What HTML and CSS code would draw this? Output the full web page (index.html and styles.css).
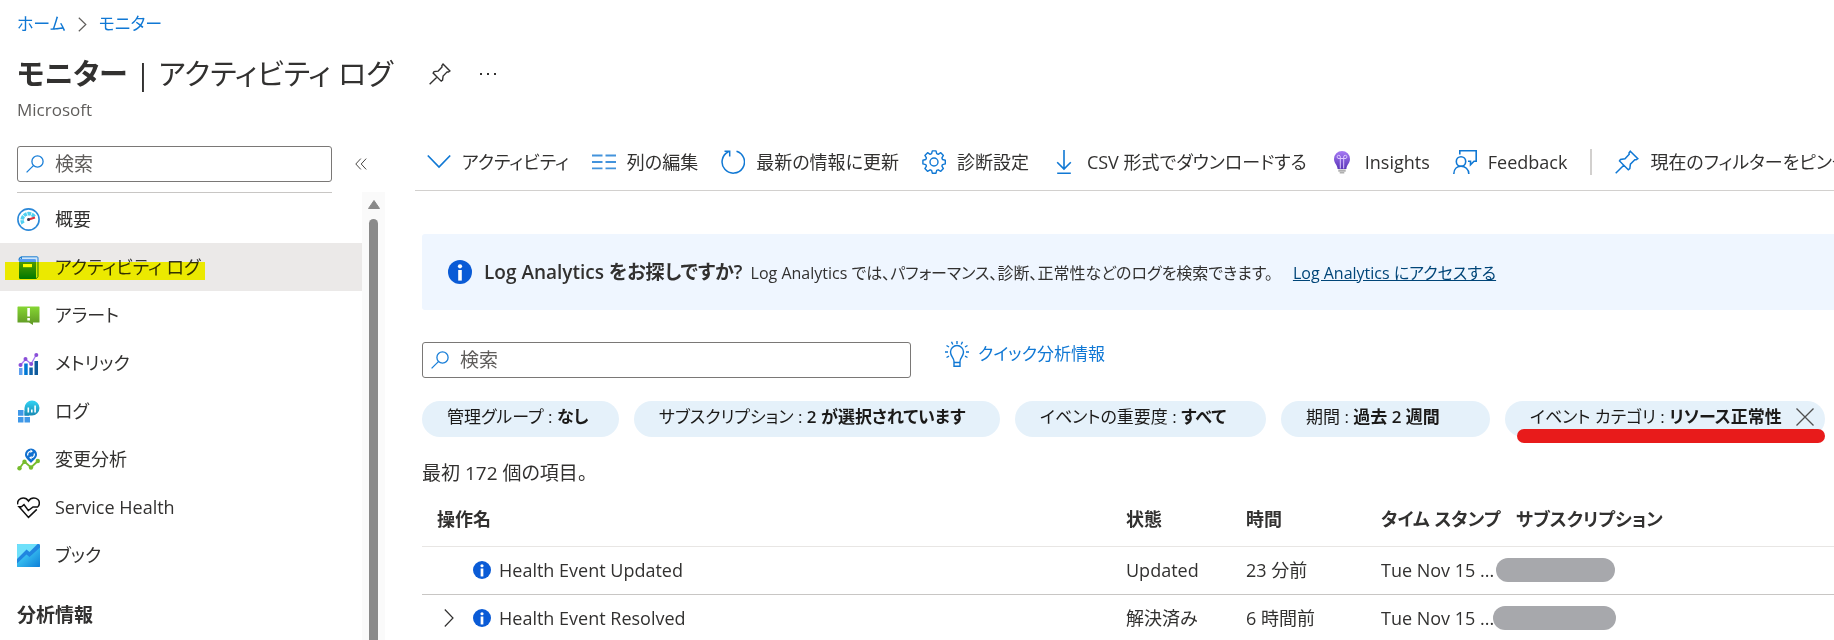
FILE: index.html
```html
<!DOCTYPE html>
<html lang="ja">
<head>
<meta charset="utf-8">
<title>モニター | アクティビティ ログ</title>
<link rel="stylesheet" href="styles.css">
</head>
<body>
<svg class="defs" aria-hidden="true">
  <defs>
    <linearGradient id="g-green" x1="0" y1="0" x2="0" y2="1"><stop offset="0" stop-color="#86d633"/><stop offset="1" stop-color="#5e9624"/></linearGradient>
    <linearGradient id="g-blue" x1="0" y1="0" x2="0" y2="1"><stop offset="0" stop-color="#5ea0ef"/><stop offset="1" stop-color="#0078d4"/></linearGradient>
    <linearGradient id="g-cyan" x1="0" y1="0" x2="0" y2="1"><stop offset="0" stop-color="#32d4f5"/><stop offset="1" stop-color="#198ab3"/></linearGradient>
    <linearGradient id="g-book" x1="0" y1="0" x2="1" y2="1"><stop offset="0" stop-color="#50e6ff"/><stop offset="1" stop-color="#0f7fd8"/></linearGradient>
    <linearGradient id="g-purple" x1="0" y1="0" x2="0" y2="1"><stop offset="0" stop-color="#a67af4"/><stop offset="1" stop-color="#5a35b8"/></linearGradient>
    <symbol id="i-search" viewBox="0 0 18 18"><g fill="none" stroke="#1a7fd8" stroke-width="1.3"><circle cx="11.5" cy="6.5" r="5.6"/><path d="M7.4 10.6.6 17.4"/></g></symbol>
    <symbol id="i-info" viewBox="0 0 24 24"><circle cx="12" cy="12" r="12" fill="#0a5bd6"/><circle cx="12" cy="6.3" r="2.1" fill="#fff"/><path d="M10.2 10h3.6v10.6h-3.6z" fill="#fff"/></symbol>
    <symbol id="i-pin" viewBox="0 0 24 24"><path d="M15.3 1.2 22.8 8.7 21.2 9.8 19.8 9.7 15.4 14.2 14.8 18.6 13.3 19.8 4.5 11 5.5 9.4 10 8.8 14.2 4.3 14 2.9ZM8.8 15.2.7 23.3" fill="none" stroke="currentColor" stroke-width="1.5"/></symbol>
  </defs>
</svg>

<header class="page-head">
  <nav class="crumbs" aria-label="階層">
    <a href="#home">ホーム</a>
    <svg width="9" height="15" viewBox="0 0 9 15"><path d="M.8.8 7.8 7.5.8 14.2" fill="none" stroke="#605e5c" stroke-width="1.2"/></svg>
    <a href="#monitor">モニター</a>
  </nav>
  <div class="title-row">
    <h1><strong>モニター</strong> | アクティビティ ログ</h1>
    <button class="icon-btn pin" aria-label="ピン留め"><svg width="22" height="22"><use href="#i-pin"/></svg></button>
    <button class="icon-btn" aria-label="その他"><svg width="18" height="4" viewBox="0 0 18 4" fill="#323130"><path d="M1 1h2v2H1zM8 1h2v2H8zM15 1h2v2h-2z"/></svg></button>
  </div>
  <p class="subtitle">Microsoft</p>
</header>

<div class="shell">
  <aside class="side">
    <div class="side-top">
      <label class="search"><svg width="18" height="18"><use href="#i-search"/></svg><input type="text" placeholder="検索" aria-label="メニューの検索"></label>
      <button class="icon-btn collapse" aria-label="折りたたむ"><svg width="12" height="12" viewBox="0 0 12 12"><path d="M5.8.6.8 6l5 5.4M11.2.6 6.2 6l5 5.4" fill="none" stroke="#484644" stroke-width="1"/></svg></button>
    </div>
    <div class="side-scroll">
      <nav class="menu" aria-label="メニュー">
        <a href="#overview"><svg width="23" height="23" viewBox="0 0 23 23"><circle cx="11.500" cy="11.500" r="10.600" fill="#fff" stroke="#2b88d8" stroke-width="1.600"/><path d="M6 15.500A6.500 6.500 0 1 1 17.500 9" fill="none" stroke="#50d0f0" stroke-width="3.600" stroke-dasharray="3.400 .7"/><path d="M11 11.800 18 9.500" stroke="#e0303c" stroke-width="2"/><circle cx="11.500" cy="11.500" r="1.500" fill="#2a3550"/></svg>概要</a>
        <a href="#activity" class="active" aria-current="page"><svg width="23" height="23" viewBox="0 0 23 23"><path d="M4.500.8H20a1 1 0 0 1 1 1V20.500l-1.500 2H4z" fill="#cfe6fa" stroke="#1f7fd0" stroke-width="1"/><rect x="2" y="3" width="17" height="20" rx="1.200" fill="url(#g-blue)"/><path d="M2 4.500Q2 1.200 5 1.200" fill="none" stroke="#1f7fd0" stroke-width="1.200"/><path d="M6 8h9v3.200H6z" fill="#fff"/></svg>アクティビティ ログ</a>
        <a href="#alerts"><svg width="23" height="23" viewBox="0 0 23 23"><path d="M1 2.500h21a.5.500 0 0 1 .5.500v15.500h-6.500V21l-4-2.500H.5V3z" fill="url(#g-green)"/><path d="M10.300 4h2.600v8.500h-2.600zM10.300 14h2.600v2.600h-2.600z" fill="#fff"/></svg>アラート</a>
        <a href="#metrics"><svg width="23" height="23" viewBox="0 0 23 23"><path d="M2 16h3.500v7H2z" fill="#5ea0ef"/><path d="M7.200 11.500h3.500V23H7.200z" fill="#0078d4"/><path d="M12.300 15.500h3.500V23h-3.500z" fill="#1062a8"/><path d="M17.500 9h3.500v14h-3.500z" fill="#0f5a9c"/><path d="M3.500 13 8.500 7.500 14.200 11.800 19.300 2.800" fill="none" stroke="#a67af4" stroke-width="1.300"/><g fill="#8a4fd8"><circle cx="3.500" cy="13" r="2"/><circle cx="8.500" cy="7" r="2"/><circle cx="14.200" cy="12" r="2"/><circle cx="19.300" cy="3" r="2"/></g></svg>メトリック</a>
        <a href="#logs"><svg width="23" height="23" viewBox="0 0 23 23"><path d="M1 10h5.500v5.800H1zM1 17h5.500v5.500H1zM7.500 17H13v5.500H7.500zM7.500 11H12v4.800H7.500z" fill="#3f98e8"/><path d="M15 .5A7.500 7.500 0 1 1 15 15.500H7.500V8A7.500 7.500 0 0 1 15 .5z" fill="url(#g-cyan)"/><path d="M10.500 7.500h1.600v5h-1.600zM14 9.500h1.600v3H14zM17.300 5.500h1.600v7h-1.600z" fill="#fff"/></svg>ログ</a>
        <a href="#changes"><svg width="23" height="23" viewBox="0 0 23 23"><path d="M2.500 20.300 7.500 13.500 14 19.500 20.800 13" fill="none" stroke="#76bc2d" stroke-width="1.800"/><g fill="#76bc2d"><circle cx="2.500" cy="20.300" r="2.200"/><circle cx="7.500" cy="13.800" r="2.200"/><circle cx="14" cy="19.500" r="2.200"/><circle cx="20.800" cy="13" r="2.200"/></g><path d="M14 .5a6 6 0 0 1 6 6c0 3.300-3 5-6 8.500-3-3.500-6-5.200-6-8.500a6 6 0 0 1 6-6z" fill="#1170cf"/><path d="M10.800 7.500A3.300 3.300 0 0 1 13.600 3.300M17.200 5.500A3.300 3.300 0 0 1 14.400 9.700" fill="none" stroke="#fff" stroke-width="1.300"/><path d="m13.400 1.600 2.500 1.700-2.500 1.700zM14.600 8l-2.500 1.700 2.500 1.700z" fill="#fff"/></svg>変更分析</a>
        <a href="#health"><svg width="23" height="23" viewBox="0 0 23 23"><path d="M.7 8.500C0 4.500 3 2 6.200 2c2.600 0 4.300 1.300 5.300 3 1-1.700 2.700-3 5.300-3 3.200 0 5.900 2.300 5.500 5.700-.2 1.800-1 2.800-1.700 3.300h-4.600l-4.700 3.500L7 8.500l-2.500 2.200H2l9.500 10.700 8.300-8" fill="none" stroke="#111" stroke-width="1.500"/></svg>Service Health</a>
        <a href="#workbooks"><svg width="23" height="23" viewBox="0 0 23 23"><rect width="23" height="23" rx="1.200" fill="#2086e0"/><path d="M0 1a1 1 0 0 1 1-1h19.500L12.500 8 9.500 5.500 0 15z" fill="#6ee0fa"/><path d="M0 19.500 9.500 10.500 12.500 13 23 3.500V22a1 1 0 0 1-1 1H1a1 1 0 0 1-1-1z" fill="url(#g-book)"/></svg>ブック</a>
        <h2>分析情報</h2>
      </nav>
      <div class="scrollbar" aria-hidden="true">
        <svg width="12" height="9" viewBox="0 0 12 9"><path d="M6 .5 11.500 8.500H.5z" fill="#8a8a8a" stroke="#8a8a8a" stroke-linejoin="round"/></svg>
        <div class="thumb"></div>
      </div>
      <div class="marker" aria-hidden="true"></div>
    </div>
  </aside>

  <main class="main">
    <div class="toolbar" role="toolbar">
      <button><svg width="24" height="24" viewBox="0 0 24 24"><path d="M.8 5.500 12 17 23.200 5.500" fill="none" stroke="#1078d4" stroke-width="1.700"/></svg>アクティビティ</button>
      <button><svg width="24" height="24" viewBox="0 0 24 24"><path d="M0 5.500h10.500M13.500 5.500H24M0 12h10.500M13.500 12H24M0 18.300h10.500M13.500 18.300H24" stroke="#4393dc" stroke-width="1.800"/></svg>列の編集</button>
      <button><svg width="24" height="24" viewBox="0 0 24 24"><path d="M15.500 1.200A11.200 11.200 0 1 1 7.500 1.800M3.500 1.200H8.700V6.500" fill="none" stroke="#1078d4" stroke-width="1.500"/></svg>最新の情報に更新</button>
      <button><svg width="24" height="24" viewBox="0 0 24 24"><g fill="none" stroke="#1078d4" stroke-width="1.400" stroke-linejoin="round"><path d="m10.300.9-.7 2.800-1.500.6L5.600 2.700 2.900 5.400l1.500 2.500-.6 1.600-2.900.7v3.700l2.900.7.6 1.500-1.500 2.500 2.600 2.700 2.600-1.500 1.500.6.7 2.800h3.700l.7-2.800 1.500-.6 2.600 1.500 2.600-2.700-1.500-2.500.6-1.500 2.800-.7v-3.700l-2.800-.7-.6-1.600 1.500-2.500-2.600-2.700-2.600 1.600-1.500-.6-.7-2.800z"/><circle cx="12" cy="12" r="4"/></g></svg>診断設定</button>
      <button><svg width="24" height="24" viewBox="0 0 24 24"><path d="M12 0v18.500M5.200 12.200 12 19l6.800-6.800M5.200 23.200h13.600" fill="none" stroke="#1078d4" stroke-width="1.600"/></svg>CSV 形式でダウンロードする</button>
      <button><svg width="24" height="24" viewBox="0 0 24 24"><path d="M12 1a8 8 0 0 1 8 8c0 4.200-3.300 5.800-3.600 10H7.600C7.300 14.800 4 13.200 4 9a8 8 0 0 1 8-8z" fill="url(#g-purple)"/><path d="M10.300 18.500V8.500M13.700 18.500V8.500M8 8.500h8M10.300 8.500V7A1.600 1.600 0 1 0 8.700 8.500M13.700 8.500V7A1.600 1.600 0 1 1 15.300 8.500" fill="none" stroke="#dcc8ff" stroke-width="1"/><path d="M8.300 19.500h7.400v2.200H8.300zM9.700 22h4.600v1.600H9.700z" fill="#b0b0b0"/></svg>Insights</button>
      <button><svg width="24" height="24" viewBox="0 0 24 24"><g fill="none" stroke="#1078d4" stroke-width="1.600"><circle cx="8" cy="11.500" r="4.700"/><path d="M.8 24C.8 19 4 16.300 8 16.300s7.800 2.700 7.800 7.700M6.800 4.500V.8h16.400v10.500H21l-3.500 3.500v-3.500H15"/></g></svg>Feedback</button>
      <span class="sep"></span>
      <button><svg width="24" height="24"><use href="#i-pin"/></svg>現在のフィルターをピン留めする</button>
    </div>

    <div class="content">
      <section class="banner">
        <svg width="24" height="24"><use href="#i-info"/></svg>
        <p><strong>Log Analytics をお探しですか?</strong> <span>Log Analytics では、パフォーマンス、診断、正常性などのログを検索できます。</span> <a href="#la">Log Analytics にアクセスする</a></p>
      </section>

      <div class="query">
        <label class="search wide"><svg width="18" height="18"><use href="#i-search"/></svg><input type="text" placeholder="検索" aria-label="ログの検索"></label>
        <a class="quick" href="#quick"><svg width="24" height="26" viewBox="0 0 24 26"><path d="M9 20.500c0-4-3.500-5-3.500-9.500a6.500 6.500 0 0 1 13 0c0 4.500-3.500 5.500-3.500 9.500v4.700H9zM9 21.500h6M12 0v3M6.500.8 7.800 3.500M17.500.8 16.200 3.500M1.500 4.500 4 6M22.500 4.500 20 6M0 11h3M21 11h3M1.500 16.500 4 15.200M22.500 16.500 20 15.200" fill="none" stroke="#1078d4" stroke-width="1.400"/></svg>クイック分析情報</a>
      </div>

      <div class="pills">
        <button class="pill">管理グループ : <b>なし</b></button>
        <button class="pill">サブスクリプション : <b>2 が選択されています</b></button>
        <button class="pill">イベントの重要度 : <b>すべて</b></button>
        <button class="pill">期間 : <b>過去 2 週間</b></button>
        <button class="pill last">イベント カテゴリ : <b>リソース正常性</b><svg width="18" height="18" viewBox="0 0 18 18"><path d="M.5.5 17.500 17.500M17.500.5.5 17.500" stroke="#505050" stroke-width="1.300"/></svg><span class="underline"></span></button>
      </div>

      <p class="count">最初 172 個の項目。</p>

      <table>
        <colgroup><col class="c-name"><col class="c-status"><col class="c-time"><col class="c-stamp"><col></colgroup>
        <thead><tr><th>操作名</th><th>状態</th><th>時間</th><th>タイム スタンプ</th><th>サブスクリプション</th></tr></thead>
        <tbody>
          <tr>
            <td><div class="op"><span class="twist"></span><svg width="18" height="18"><use href="#i-info"/></svg>Health Event Updated</div></td>
            <td>Updated</td><td>23 分前</td><td>Tue Nov 15 ...</td><td><span class="mask"></span></td>
          </tr>
          <tr>
            <td><div class="op"><button class="twist" aria-label="展開"><svg width="10" height="18" viewBox="0 0 10 18"><path d="M.8.5 9 9 .8 17.500" fill="none" stroke="#323130" stroke-width="1.200"/></svg></button><svg width="18" height="18"><use href="#i-info"/></svg>Health Event Resolved</div></td>
            <td>解決済み</td><td>6 時間前</td><td>Tue Nov 15 ...</td><td><span class="mask wide"></span></td>
          </tr>
        </tbody>
      </table>
    </div>
  </main>
</div>
</body>
</html>
```
FILE: styles.css
```css
* { box-sizing: border-box; }

body {
  margin: 0;
  height: 100vh;
  display: flex;
  flex-direction: column;
  overflow: hidden;
  background: #fff;
  color: #323130;
  font-family: "Open Sans", "Noto Sans CJK JP", sans-serif;
  font-feature-settings: "palt";
  font-size: 18px;
  line-height: 24px;
}

h1, h2, p { margin: 0; font-weight: inherit; }
button, input { font: inherit; font-feature-settings: inherit; color: inherit; }
button { margin: 0; padding: 0; border: 0; background: none; white-space: nowrap; }
svg { flex: none; display: block; }
strong, b { font-weight: 600; }
.defs { position: absolute; width: 0; height: 0; }

.page-head { flex: none; padding: 12px 17px 0; }
.crumbs { display: flex; align-items: center; gap: 12px; font-size: 17px; }
.crumbs a { color: #1078d4; text-decoration: none; }
.title-row { display: flex; align-items: center; margin-top: 14px; height: 48px; }
.title-row h1 { font-size: 29px; line-height: 48px; white-space: nowrap; }
.pin { margin: 0 28px 0 36px; }
.subtitle { color: #605e5c; font-size: 17px; line-height: 24px; }

.shell { flex: 1; min-height: 0; display: flex; gap: 30px; margin-top: 24px; }
.side { flex: none; width: 385px; display: flex; flex-direction: column; }
.side-top { display: flex; align-items: center; gap: 23px; padding-left: 17px; }
.search {
  display: flex;
  align-items: center;
  gap: 11px;
  width: 315px;
  height: 36px;
  padding: 0 8px;
  border: 1px solid #7a7876;
  border-radius: 3px;
}
.search input { flex: 1; min-width: 0; padding: 0; border: 0; outline: 0; background: none; font-size: 19px; }
.search input::placeholder { color: #605e5c; opacity: 1; }

.side-scroll { position: relative; flex: 1; min-height: 0; display: flex; margin-top: 10px; }
.menu { flex: 1; overflow: hidden; }
.menu::before { content: ""; display: block; height: 2px; margin: 0 30px 0 17px; border-top: 1px solid #c8c6c4; }
.menu a {
  display: flex;
  align-items: center;
  gap: 15px;
  height: 48px;
  padding-left: 17px;
  color: inherit;
  text-decoration: none;
}
.menu a.active { background: #ebe9e8; }
.menu h2 { padding: 24px 17px; font-size: 19px; line-height: 24px; font-weight: 600; }
.marker {
  position: absolute;
  left: 5px;
  top: 70px;
  width: 200px;
  height: 18px;
  background: #ff0;
  mix-blend-mode: multiply;
}
.scrollbar { width: 23px; display: flex; flex-direction: column; align-items: center; gap: 10px; padding-top: 8px; background: #fafafa; }
.thumb { flex: 1; width: 9px; border-radius: 5px 5px 0 0; background: #8a8a8a; }

.main { flex: 1; min-width: 0; overflow: hidden; }
.toolbar {
  display: flex;
  align-items: center;
  gap: 23px;
  height: 45px;
  padding: 0 0 12px 12px;
  border-bottom: 1px solid #d2d0ce;
  overflow: hidden;
}
.toolbar button { flex: none; display: flex; align-items: center; gap: 11px; }
.toolbar svg { color: #1078d4; }
.sep { flex: none; width: 2px; height: 26px; background: #d2d0ce; }

.content { padding: 43px 0 0 7px; }
.banner { display: flex; align-items: center; gap: 12px; height: 76px; padding-left: 26px; background: #eff6ff; border-radius: 3px 0 0 3px; font-size: 16px; white-space: nowrap; }
.banner strong { font-size: 19px; margin-right: 4px; }
.banner a { color: #004578; margin-left: 16px; }

.query { display: flex; align-items: flex-start; gap: 34px; margin-top: 32px; }
.search.wide { width: 489px; }
.quick { display: flex; align-items: center; gap: 9px; height: 24px; color: #1078d4; font-size: 17px; text-decoration: none; }

.pills { display: grid; grid-template-columns: 197px 366px 251px 209px 320px; gap: 15px; margin-top: 23px; }
.pill { height: 36px; padding: 0 0 4px 25px; border-radius: 18px; background: #e5f1fa; color: #1b1a19; font-size: 17px; text-align: left; }
.pill.last { position: relative; display: flex; align-items: center; white-space: pre; padding-right: 11px; }
.pill.last svg { margin-left: auto; }
.underline { position: absolute; left: 12px; right: 0; top: 28px; height: 14px; border-radius: 7px; background: #e81b1b; }

.count { margin-top: 24px; font-size: 19px; line-height: 24px; }

table { width: 100%; margin-top: 11px; border-collapse: collapse; table-layout: fixed; }
.c-name { width: 689px; }
.c-status { width: 120px; }
.c-time { width: 135px; }
.c-stamp { width: 135px; }
th, td { height: 48px; padding: 0 0 0 15px; text-align: left; white-space: nowrap; border-bottom: 1px solid #c8c6c4; }
th { height: 50px; padding-bottom: 3px; border-bottom-color: #e8e6e4; font-weight: 600; }
.op { display: flex; align-items: center; gap: 8px; }
.twist { width: 28px; padding-left: 7px; }
.mask { position: relative; left: -20px; display: block; width: 119px; height: 24px; border-radius: 12px; background: #a7a8ac; }
.mask.wide { left: -23px; width: 123px; }
```
